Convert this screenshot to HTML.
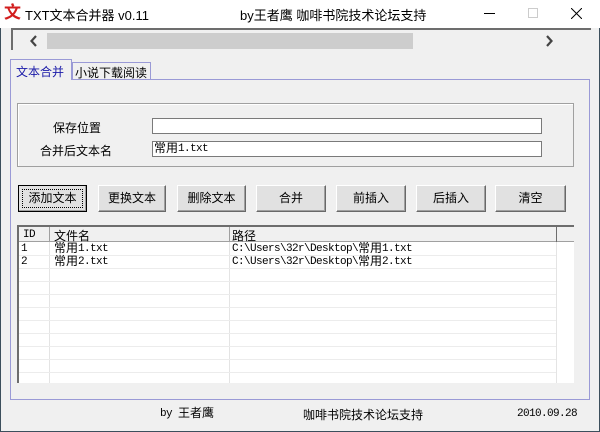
<!DOCTYPE html><html><head><meta charset="utf-8"><style>
*{margin:0;padding:0;box-sizing:border-box}
body{width:600px;height:432px;background:#f0f0f0;font-family:"Liberation Sans","Noto Sans CJK SC",sans-serif;font-size:12px;color:#000;position:relative;overflow:hidden}
.a{position:absolute}
.btn{position:absolute;top:185px;height:27px;background:#e1e1e1;border:1px solid #fff;border-right-color:#696969;border-bottom-color:#696969;text-align:center;line-height:25px;font-size:12px;box-shadow:inset -1px -1px 0 #a0a0a0}
.mono{font-family:"Liberation Mono",monospace;font-size:11px;letter-spacing:-0.6px;line-height:13px}
.mono b{font-weight:normal;font-family:"Noto Sans CJK SC",sans-serif;font-size:12px;line-height:0;letter-spacing:0;position:relative;top:1px}
.l{display:block;height:13px;line-height:13px;white-space:nowrap}
.row{position:absolute;left:19px;width:537px;height:13px;border-bottom:1px solid #ececec}
</style></head><body>
<div class="a" style="left:0;top:0;width:600px;height:432px;border:1px solid #3c4e5c;border-top:none"></div>
<div class="a" style="left:0;top:0;width:600px;height:28px;background:#fff"></div>
<div class="a" style="left:4px;top:3px;color:#d21e1e;font-weight:bold;font-size:17px;line-height:20px">文</div>
<div class="a" style="left:25px;top:5px;font-size:13px">TXT文本合并器 v0.11</div>
<div class="a" style="left:240px;top:5px;font-size:13px">by王者鹰 咖啡书院技术论坛支持</div>
<div class="a" style="left:484px;top:13px;width:11px;height:1px;background:#000"></div>
<div class="a" style="left:528px;top:8px;width:10px;height:10px;border:1px solid #ccc"></div>
<svg class="a" style="left:571px;top:8px" width="11" height="11"><path d="M0 0L11 11M11 0L0 11" stroke="#000" stroke-width="1"/></svg>
<div class="a" style="left:11px;top:28px;width:580px;height:22px;border-top:2px solid #6d6d6d;border-left:2px solid #6d6d6d;background:#f0f0f0"></div>
<div class="a" style="left:47px;top:33px;width:366px;height:16px;background:#cdcdcd"></div>
<svg class="a" style="left:30px;top:35px" width="8" height="12"><path d="M6 1L1.5 6L6 11" stroke="#444" stroke-width="2.2" fill="none"/></svg>
<svg class="a" style="left:545px;top:35px" width="8" height="12"><path d="M2 1L6.5 6L2 11" stroke="#444" stroke-width="2.2" fill="none"/></svg>
<div class="a" style="left:10px;top:79px;width:580px;height:321px;border:1px solid #9a9ad6"></div>
<div class="a" style="left:10px;top:59px;width:62px;height:21px;border:1px solid #9a9ad6;border-bottom:none;background:#f0f0f0;color:#1a1aa8;padding:3px 0 0 5px">文本合并</div>
<div class="a" style="left:72px;top:62px;width:79px;height:17px;border:1px solid #9a9ad6;border-bottom:none;padding:1px 0 0 2px">小说下载阅读</div>
<div class="a" style="left:17px;top:103px;width:557px;height:64px;border:1px solid #a0a0a0;box-shadow:1px 1px 0 #fff inset"></div>
<div class="a" style="left:53px;top:119px">保存位置</div>
<div class="a" style="left:40px;top:142px">合并后文本名</div>
<div class="a" style="left:152px;top:118px;width:390px;height:16px;background:#fff;border:1px solid #7a7a7a"></div>
<div class="a mono" style="left:152px;top:141px;width:390px;height:16px;background:#fff;border:1px solid #7a7a7a;padding-left:1px;line-height:14px"><b>常用</b>1.txt</div>
<div class="btn" style="left:18px;width:69px;outline:1px dotted #000;outline-offset:-5px;border:1px solid #000">添加文本</div>
<div class="btn" style="left:98px;width:68px">更换文本</div>
<div class="btn" style="left:177px;width:69px">删除文本</div>
<div class="btn" style="left:256px;width:70px">合并</div>
<div class="btn" style="left:336px;width:70px">前插入</div>
<div class="btn" style="left:416px;width:70px">后插入</div>
<div class="btn" style="left:495px;width:71px">清空</div>
<div class="a" style="left:17px;top:225px;width:557px;height:158px;background:#fff;border-top:2px solid #6d6d6d;border-left:2px solid #6d6d6d"></div>
<div class="a" style="left:19px;top:227px;width:555px;height:15px;background:#f0f0f0;border-bottom:1px solid #a0a0a0"></div>
<div class="a" style="left:49px;top:227px;width:1px;height:156px;background:#e4e4e4"></div>
<div class="a" style="left:229px;top:227px;width:1px;height:156px;background:#e4e4e4"></div>
<div class="a" style="left:556px;top:227px;width:1px;height:156px;background:#e4e4e4"></div>
<div class="a" style="left:49px;top:227px;width:1px;height:15px;background:#a0a0a0"></div>
<div class="a" style="left:229px;top:227px;width:1px;height:15px;background:#a0a0a0"></div>
<div class="a" style="left:556px;top:227px;width:1px;height:15px;background:#6d6d6d"></div>
<div class="a mono" style="left:23px;top:229px">ID</div>
<div class="a" style="left:54px;top:227px">文件名</div>
<div class="a" style="left:232px;top:227px">路径</div>
<div class="row" style="top:243px"></div><div class="row" style="top:256px"></div><div class="row" style="top:269px"></div><div class="row" style="top:282px"></div><div class="row" style="top:295px"></div><div class="row" style="top:308px"></div><div class="row" style="top:321px"></div><div class="row" style="top:334px"></div><div class="row" style="top:347px"></div><div class="row" style="top:360px"></div>
<div class="a mono" style="left:21px;top:243px"><span class="l">1</span><span class="l">2</span></div>
<div class="a mono" style="left:54px;top:243px"><span class="l"><b>常用</b>1.txt</span><span class="l"><b>常用</b>2.txt</span></div>
<div class="a mono" style="left:232px;top:243px"><span class="l">C:\Users\32r\Desktop\<b>常用</b>1.txt</span><span class="l">C:\Users\32r\Desktop\<b>常用</b>2.txt</span></div>
<div class="a mono" style="left:160px;top:408px">by <b>王者鹰</b></div>
<div class="a" style="left:303px;top:406px">咖啡书院技术论坛支持</div>
<div class="a mono" style="left:517px;top:408px">2010.09.28</div>
</body></html>
